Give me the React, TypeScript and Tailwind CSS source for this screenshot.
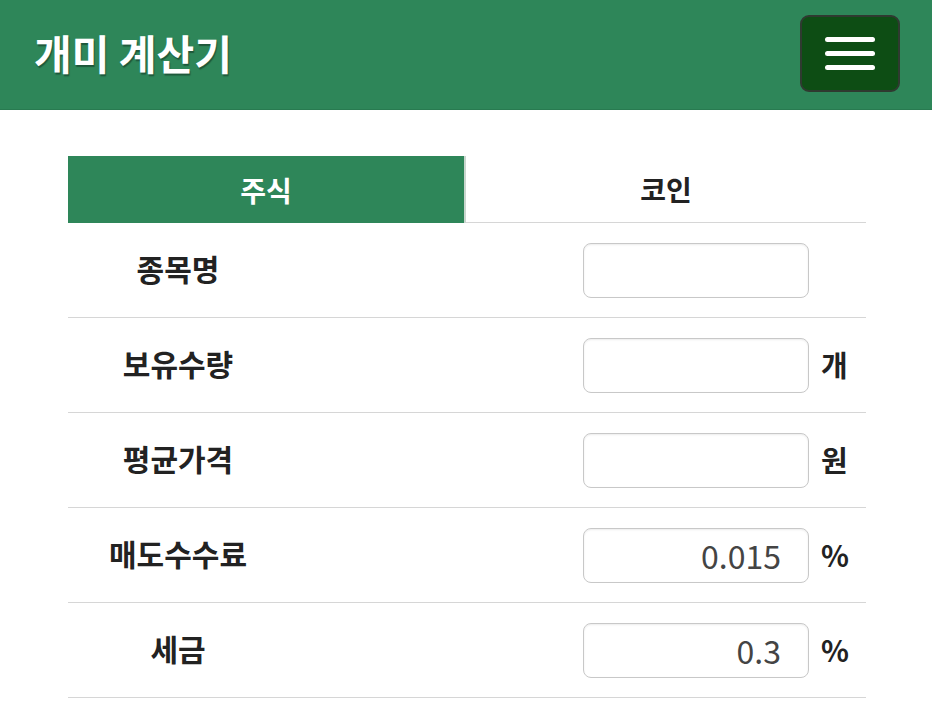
import React from 'react';

const font = { fontFamily: '"Noto Sans CJK KR", "Noto Sans", sans-serif' };

type Row = { label: string; value: string; unit?: string };

const rows: Row[] = [
  { label: '종목명', value: '' },
  { label: '보유수량', value: '', unit: '개' },
  { label: '평균가격', value: '', unit: '원' },
  { label: '매도수수료', value: '0.015', unit: '%' },
  { label: '세금', value: '0.3', unit: '%' },
];

const App: React.FC = () => {
  return (
    <div className="min-h-[720px] bg-white" style={font}>
      <header className="h-[110px] bg-[#2e8659] flex items-center justify-between pl-[34px] pr-[32px] border-b border-[#287a50]">
        <h1 className="text-[41px] font-bold text-white [text-shadow:1px_2px_1px_rgba(0,0,0,0.35)] mt-[-4px]">
          개미 계산기
        </h1>
        <button className="w-[100px] h-[77px] mt-[-3px] rounded-[9px] bg-[#0d4d14] border-2 border-[#2f3a30] flex flex-col items-center justify-center gap-[9px]">
          <span className="block w-[50px] h-[5px] rounded-full bg-white" />
          <span className="block w-[50px] h-[5px] rounded-full bg-white" />
          <span className="block w-[50px] h-[5px] rounded-full bg-white" />
        </button>
      </header>

      <div className="mx-[68px] mt-[46px] w-[798px]">
        <div className="flex h-[67px]">
          <div className="w-[398px] bg-[#2e8659] border-r-2 border-[#c9d6ce] flex items-center justify-center">
            <span className="text-[28px] font-bold text-white">주식</span>
          </div>
          <div className="flex-1 border-b border-[#d6d6d6] flex items-center justify-center">
            <span className="text-[28px] font-bold text-[#222]">코인</span>
          </div>
        </div>

        {rows.map((row) => (
          <div key={row.label} className="h-[95px] flex items-center border-b border-[#d6d6d6]">
            <div className="w-[220px] text-center text-[30px] font-bold text-[#222] mt-[-4px]">{row.label}</div>
            <div className="flex-1 flex items-center justify-end">
              <div className="w-[226px] h-[55px] rounded-[8px] border border-[#c8c8c8] shadow-[inset_0_1px_2px_rgba(0,0,0,0.08)] flex items-center justify-end pr-[27px] text-[32px] text-[#444]">
                {row.value}
              </div>
              <div className="w-[57px] pl-[12px] text-[29px] font-bold text-[#222]">{row.unit ?? ''}</div>
            </div>
          </div>
        ))}
      </div>
    </div>
  );
};

export default App;
